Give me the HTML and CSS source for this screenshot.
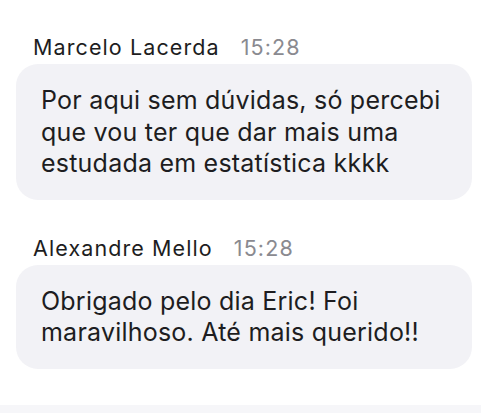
FILE: index.html
```html
<!DOCTYPE html>
<html lang="pt">
<head>
<meta charset="utf-8">
<link rel="stylesheet" href="styles.css">
</head>
<body>
<main class="chat">
  <section class="msg">
    <div class="meta"><span class="name">Marcelo Lacerda</span><span class="time">15:28</span></div>
    <div class="bubble">Por aqui sem dúvidas, só percebi que vou ter que dar mais uma estudada em estatística kkkk</div>
  </section>
  <section class="msg">
    <div class="meta"><span class="name">Alexandre Mello</span><span class="time">15:28</span></div>
    <div class="bubble">Obrigado pelo dia Eric! Foi maravilhoso. Até mais querido!!</div>
  </section>
</main>
<footer class="composer"></footer>
</body>
</html>
```
FILE: styles.css
```css
html, body {
  height: 100%;
}
body {
  margin: 0;
  background: #ffffff;
  font-family: Inter, "Noto Sans", sans-serif;
  color: #1d1d21;
  display: flex;
  flex-direction: column;
  overflow: hidden;
}
.chat {
  flex: 1;
  padding: 35px 9px 0 16px;
  display: flex;
  flex-direction: column;
  gap: 36px;
}
.msg {
  display: flex;
  flex-direction: column;
  align-items: flex-start;
  gap: 5px;
}
.meta {
  padding-left: 17px;
  font-size: 21.5px;
  line-height: 24px;
  letter-spacing: 1.1px;
  display: flex;
  gap: 21px;
}
.name {
  color: #1d1d21;
}
.time {
  color: #8a8a90;
}
.bubble {
  background: #f2f2f6;
  border-radius: 22px;
  padding: 21px 25px 20px 25px;
  font-size: 25px;
  line-height: 31.5px;
  letter-spacing: 0.22px;
  color: #1d1d21;
  max-width: 410px;
}
.composer {
  height: 8px;
  background: #f6f6f9;
}
```
